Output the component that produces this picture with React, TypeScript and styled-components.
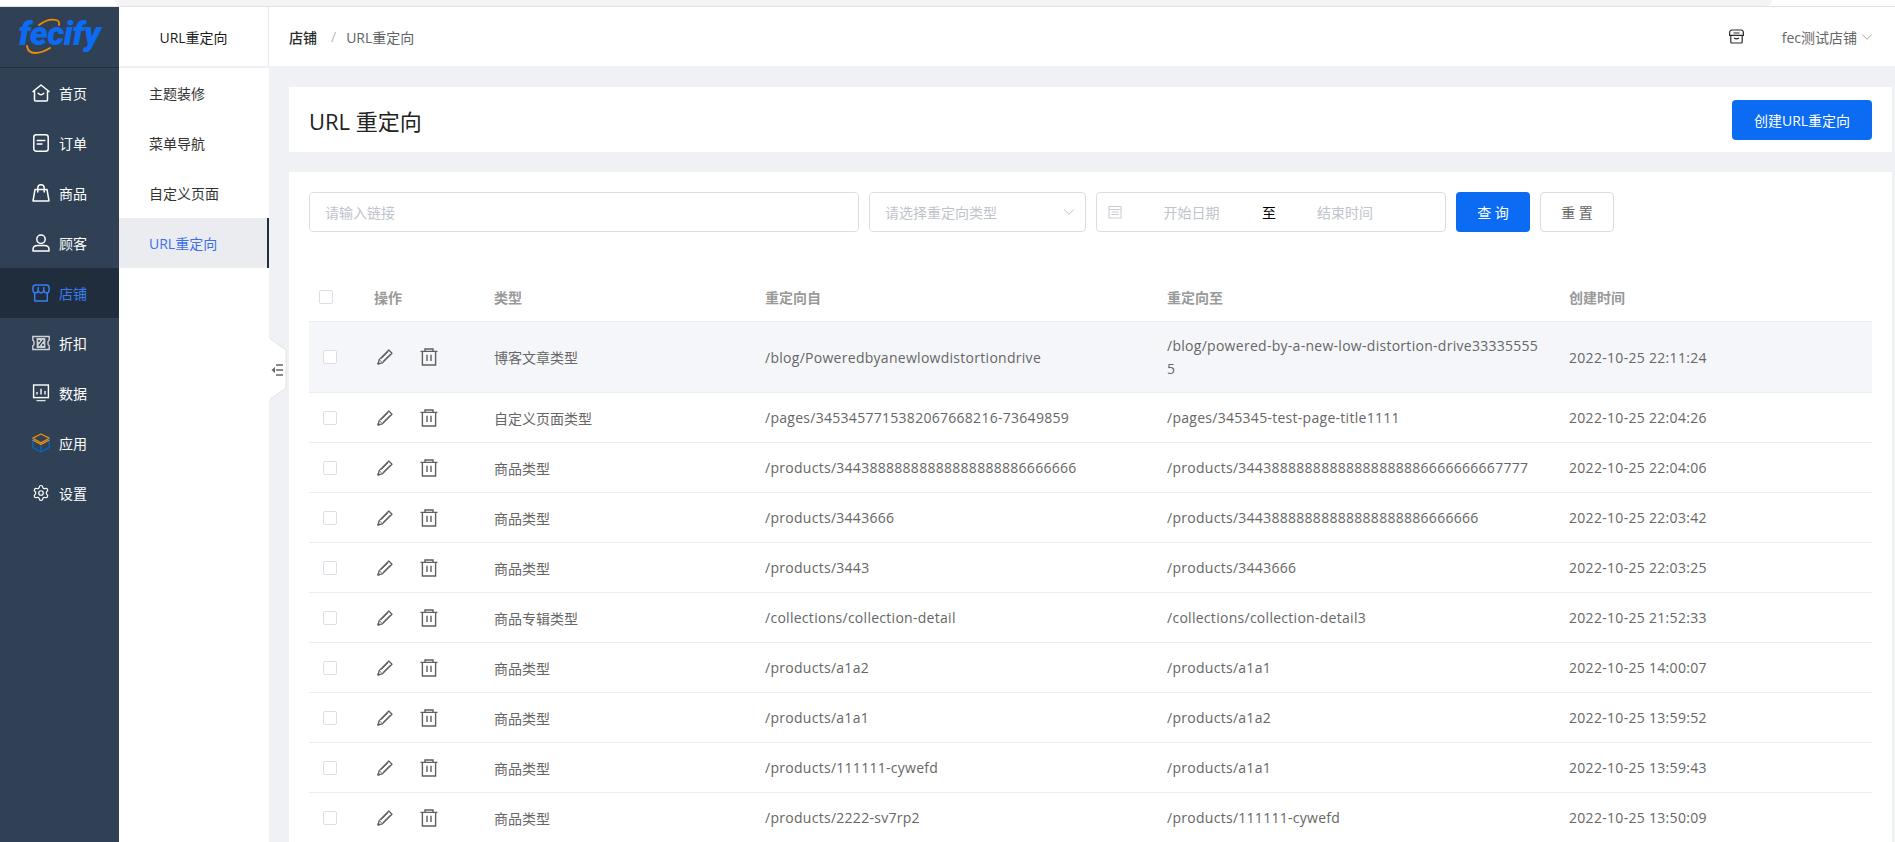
import React from "react";
import styled, { createGlobalStyle } from "styled-components";
import { Settings, ChevronDown } from "lucide-react";

const Global = createGlobalStyle`
  html, body { margin: 0; padding: 0; height: 100%; overflow: hidden; }
  body { font-family: "Open Sans", "Noto Sans CJK SC", sans-serif; font-size: 14px; background: #fff; }
  #root { height: 100%; }
  * { box-sizing: border-box; }
`;

const BLUE = "#0b6cf3";
const LINE = "#dcdee6";

const Shell = styled.div`
  display: flex;
  flex-direction: column;
  height: 842px;
  overflow: hidden;
`;
const BrowserStrip = styled.div`
  height: 7px;
  flex: none;
  padding-left: 115px;
  padding-right: 123px;
  border-bottom: 1px solid #e2e2e2;
  background: #fff;
`;
const BrowserTab = styled.div`
  height: 6px;
  background: #f4f4f4;
  border-radius: 0 0 8px 8px;
`;
const Body = styled.div`
  flex: 1;
  display: flex;
  min-height: 0;
`;
const Sidebar = styled.nav`
  width: 119px;
  flex: none;
  background: #304156;
  display: flex;
  flex-direction: column;
`;
const LogoBox = styled.div`
  position: relative;
  height: 61px;
  flex: none;
  border-bottom: 1px solid #242f3d;
  display: flex;
  justify-content: center;
  padding-top: 3px;
`;
const LogoText = styled.span`
  font-family: "Roboto", "Liberation Sans", sans-serif;
  font-weight: 900;
  font-style: italic;
  font-size: 34px;
  line-height: 46px;
  letter-spacing: -0.5px;
  color: ${BLUE};
`;
const Swoosh = styled.svg`
  position: absolute;
  left: 20px;
  top: 10px;
`;
const NavItem = styled.div<{ $active?: boolean }>`
  height: 50px;
  flex: none;
  display: flex;
  align-items: center;
  padding-left: 32px;
  gap: 9px;
  background: ${(p) => (p.$active ? "#1f2d3d" : "transparent")};
  color: ${(p) => (p.$active ? "#3a7df0" : "#fff")};
  font-size: 14px;
`;
const NavIconBox = styled.span`
  width: 18px;
  height: 18px;
  display: flex;
  align-items: center;
  justify-content: center;
  flex: none;
`;
const SubNav = styled.aside`
  width: 150px;
  flex: none;
  background: #fff;
  display: flex;
  flex-direction: column;
`;
const SubHead = styled.div`
  height: 59px;
  flex: none;
  display: flex;
  align-items: center;
  justify-content: center;
  color: #1c1c1c;
  border-right: 1px solid #e8eaef;
`;
const SubDivider = styled.div`
  height: 2px;
  flex: none;
  background: #eef0f5;
`;
const SubItem = styled.div<{ $active?: boolean }>`
  height: 50px;
  flex: none;
  display: flex;
  align-items: center;
  padding-left: 30px;
  color: ${(p) => (p.$active ? "#3b6fe8" : "#333")};
  background: ${(p) => (p.$active ? "#ebecf0" : "#fff")};
  border-right: 2px solid ${(p) => (p.$active ? "#1f2d3d" : "#fff")};
`;
const Main = styled.main`
  position: relative;
  flex: 1;
  min-width: 0;
  background: #f0f1f5;
  display: flex;
  flex-direction: column;
`;
const TopBar = styled.header`
  height: 59px;
  flex: none;
  background: #fff;
  display: flex;
  align-items: center;
  padding: 0 19px 0 20px;
`;
const Crumb = styled.span`
  color: #2b2b2b;
  font-weight: 500;
`;
const CrumbSep = styled.span`
  color: #b5b8c0;
  margin: 0 10px 0 14px;
`;
const CrumbNow = styled.span`
  color: #606266;
`;
const TopRight = styled.div`
  margin-left: auto;
  display: flex;
  align-items: center;
  color: #666;
`;
const StoreName = styled.span`
  margin-left: 38px;
  margin-right: 1px;
`;
const Content = styled.div`
  flex: 1;
  min-height: 0;
  padding: 21px 3px 0 20px;
  display: flex;
  flex-direction: column;
  gap: 20px;
`;
const PageHead = styled.section`
  height: 65px;
  flex: none;
  background: #fff;
  display: flex;
  align-items: center;
  justify-content: space-between;
  padding: 0 20px 0 20px;
`;
const Title = styled.h1`
  margin: 0;
  font-size: 22px;
  font-weight: 400;
  color: #222;
`;
const PrimaryButton = styled.button<{ $w: number }>`
  width: ${(p) => p.$w}px;
  height: 40px;
  flex: none;
  border: 0;
  border-radius: 4px;
  padding: 0;
  background: ${BLUE};
  color: #fff;
  font: inherit;
`;
const PlainButton = styled.button`
  width: 74px;
  height: 40px;
  flex: none;
  border: 1px solid ${LINE};
  border-radius: 4px;
  padding: 0;
  background: #fff;
  color: #666;
  font: inherit;
`;
const Card = styled.section`
  flex: 1;
  min-height: 0;
  background: #fff;
  padding: 20px 20px 0;
  overflow: hidden;
`;
const Filters = styled.div`
  display: flex;
  gap: 10px;
  height: 40px;
`;
const Field = styled.div<{ $w: number }>`
  width: ${(p) => p.$w}px;
  height: 40px;
  flex: none;
  border: 1px solid ${LINE};
  border-radius: 4px;
  display: flex;
  align-items: center;
  padding: 0 15px;
  color: #c0c4cc;
`;
const SelectField = styled(Field)`
  justify-content: space-between;
  padding-right: 7px;
`;
const DateField = styled(Field)`
  padding: 0 0 0 11px;
`;
const RangeText = styled.span<{ $w: number }>`
  width: ${(p) => p.$w}px;
  text-align: center;
  flex: none;
`;
const RangeSep = styled.span`
  width: 16px;
  flex: none;
  text-align: center;
  color: #000;
`;
const Table = styled.div`
  margin-top: 40px;
`;
const Row = styled.div<{ $head?: boolean; $hi?: boolean; $h: number }>`
  display: grid;
  grid-template-columns: 65px 120px 271px 402px 402px 1fr;
  align-items: center;
  height: ${(p) => p.$h}px;
  border-bottom: 1px solid #ebedf2;
  background: ${(p) => (p.$hi ? "#f5f6fa" : "#fff")};
  color: ${(p) => (p.$head ? "#999" : "#666")};
  font-weight: ${(p) => (p.$head ? 700 : 400)};
`;
const CheckCell = styled.div<{ $head?: boolean }>`
  padding-left: ${(p) => (p.$head ? 10 : 14)}px;
  display: flex;
`;
const Check = styled.span`
  width: 14px;
  height: 14px;
  border: 1px solid ${LINE};
  border-radius: 2px;
  background: #fff;
`;
const Actions = styled.div`
  display: flex;
  align-items: center;
  padding-left: 3px;
  gap: 27px;
`;
const Link = styled.div`
  padding-right: 27px;
  word-break: break-all;
  line-height: 23px;
  letter-spacing: 0.28px;
`;
const DateCell = styled.div`
  letter-spacing: 0.3px;
`;
const Handle = styled.svg`
  position: absolute;
  left: 0;
  top: 331px;
`;

const Icon = styled.svg`
  display: block;
  flex: none;
`;

const stroke = { fill: "none", stroke: "currentColor", strokeWidth: 1.5, strokeLinecap: "round" as const, strokeLinejoin: "round" as const };

const HomeIcon = () => (
  <Icon width="18" height="18" viewBox="0 0 18 18" {...stroke}>
    <path d="M9 1 L17 7.5 H15.5 V16 a1 1 0 0 1 -1 1 H3.5 a1 1 0 0 1 -1 -1 V7.5 H1 Z" />
    <path d="M6.2 9.2 Q9 12.2 11.8 9.2" />
  </Icon>
);
const OrderIcon = () => (
  <Icon width="18" height="18" viewBox="0 0 18 18" {...stroke}>
    <rect x="1.8" y="0.8" width="14.4" height="16.4" rx="2.5" />
    <path d="M5.2 6.5 H12.8 M5.2 10 H10" />
  </Icon>
);
const BagIcon = () => (
  <Icon width="18" height="18" viewBox="0 0 18 18" {...stroke}>
    <path d="M3 5.5 H15 L17 17 H1 Z" />
    <path d="M5.8 8 V4 a3.2 3.2 0 0 1 6.4 0 V8" />
  </Icon>
);
const UserIcon = () => (
  <Icon width="18" height="18" viewBox="0 0 18 18" {...stroke}>
    <circle cx="9" cy="5.2" r="4.2" />
    <path d="M1 17 V15.5 Q1 11.5 5.5 11.5 H12.5 Q17 11.5 17 15.5 V17 Z" />
  </Icon>
);
const ShopIcon = () => (
  <Icon width="18" height="18" viewBox="0 0 18 18" {...stroke}>
    <path d="M3.5 1 H14.5 Q17.2 1 17.2 4.5 Q17.2 9 14.6 9 Q12.4 9 11.8 6.8 Q11 9 9 9 Q7 9 6.2 6.8 Q5.6 9 3.4 9 Q0.8 9 0.8 4.5 Q0.8 1 3.5 1 Z" />
    <path d="M6.2 3.5 V6.8 M11.8 3.5 V6.8" />
    <path d="M2.7 9 V17 H15.3 V9" />
  </Icon>
);
const TicketIcon = () => (
  <Icon width="18" height="18" viewBox="0 0 18 18">
    <path d="M0.8 2.5 H17.2 V6.2 Q15.6 7 16 9 Q15.6 11 17.2 11.8 V15.5 H0.8 V11.8 Q2.4 11 2 9 Q2.4 7 0.8 6.2 Z" fill="none" stroke="#cfd3d8" strokeWidth="1.4" />
    <rect x="4.6" y="4" width="8.8" height="10" fill="#c9ced5" />
    <path d="M6.8 11.8 L11.2 6.2" stroke="#1f2d3d" strokeWidth="1.1" />
    <circle cx="7" cy="7" r="0.9" fill="#1f2d3d" />
    <circle cx="11" cy="11" r="0.9" fill="#1f2d3d" />
  </Icon>
);
const ChartIcon = () => (
  <Icon width="18" height="18" viewBox="0 0 18 18">
    <rect x="1.6" y="1" width="14.8" height="12.6" fill="none" stroke="#fff" strokeWidth="1.4" />
    <path d="M5 10.5 V8 M9 10.5 V4.8 M13 10.5 V7" stroke="#dfe3e8" strokeWidth="1.6" />
    <path d="M4.5 16.6 H13.5" stroke="#dfe3e8" strokeWidth="1.3" />
  </Icon>
);
const CubeIcon = () => (
  <Icon width="18" height="20" viewBox="0 0 18 20" fill="none" strokeWidth="1.3" strokeLinejoin="round">
    <path d="M9 1 L17.2 5.2 L9 9.8 L0.8 5.2 Z" stroke="#e8910f" />
    <path d="M0.8 5.6 V14.6 L9 19 L17.2 14.6 V5.6 M9 10.2 V19" stroke="#0b66bd" />
    <path d="M0.8 7 L9 11.4 L17.2 7" stroke="#e8910f" />
  </Icon>
);
const PencilIcon = () => (
  <Icon width="16" height="16" viewBox="0 0 16 16" fill="none" stroke="#5f5f5f" strokeWidth="1.25" strokeLinejoin="round">
    <path d="M1 15 L2.2 10.6 L11.8 1 L15 4.2 L5.4 13.8 Z" />
    <path d="M2.2 10.6 L5.4 13.8 M4.2 9.8 L11.2 2.8 M6.4 12 L13.4 5" strokeWidth="0.9" />
    <path d="M1 15 L2.6 14.6 L1.4 13.4 Z" fill="#5f5f5f" />
  </Icon>
);
const TrashIcon = () => (
  <Icon width="18" height="18" viewBox="0 0 18 18" fill="none" stroke="#5f5f5f" strokeWidth="1.4">
    <path d="M0.5 3.4 H17.5 M5 3.2 V1 H13 V3.2" />
    <path d="M2.4 3.4 V17 H15.6 V3.4" />
    <path d="M7 6.8 V13 M11 6.8 V13" />
  </Icon>
);
const CalendarIcon = () => (
  <Icon width="14" height="14" viewBox="0 0 14 14" fill="none" stroke="#c8ccd3" strokeWidth="1">
    <rect x="1" y="1.5" width="12" height="11.5" />
    <path d="M1 4.5 H13 M3.5 7 H10.5 M3.5 9.5 H10.5" />
  </Icon>
);
const HeadStoreIcon = () => (
  <Icon width="15" height="15" viewBox="0 0 15 15" fill="none" stroke="#2b2b2b" strokeWidth="1.2">
    <path d="M3 1 H12 Q14.4 1 14.4 4 V6.4 H0.6 V4 Q0.6 1 3 1 Z" />
    <path d="M1.8 6.4 V13 a1 1 0 0 0 1 1 H12.2 a1 1 0 0 0 1 -1 V6.4" />
    <path d="M4.5 4 H10.5 M5 9 Q7.5 10.6 10 9" />
  </Icon>
);

const menu = [
  { label: "首页", icon: <HomeIcon /> },
  { label: "订单", icon: <OrderIcon /> },
  { label: "商品", icon: <BagIcon /> },
  { label: "顾客", icon: <UserIcon /> },
  { label: "店铺", icon: <ShopIcon />, active: true },
  { label: "折扣", icon: <TicketIcon /> },
  { label: "数据", icon: <ChartIcon /> },
  { label: "应用", icon: <CubeIcon /> },
  { label: "设置", icon: <Settings size={20} strokeWidth={1.6} /> },
];

const rows = [
  ["博客文章类型", "/blog/Poweredbyanewlowdistortiondrive", "/blog/powered-by-a-new-low-distortion-drive333355555", "2022-10-25 22:11:24"],
  ["自定义页面类型", "/pages/3453457715382067668216-73649859", "/pages/345345-test-page-title1111", "2022-10-25 22:04:26"],
  ["商品类型", "/products/34438888888888888888886666666", "/products/34438888888888888888886666666667777", "2022-10-25 22:04:06"],
  ["商品类型", "/products/3443666", "/products/34438888888888888888886666666", "2022-10-25 22:03:42"],
  ["商品类型", "/products/3443", "/products/3443666", "2022-10-25 22:03:25"],
  ["商品专辑类型", "/collections/collection-detail", "/collections/collection-detail3", "2022-10-25 21:52:33"],
  ["商品类型", "/products/a1a2", "/products/a1a1", "2022-10-25 14:00:07"],
  ["商品类型", "/products/a1a1", "/products/a1a2", "2022-10-25 13:59:52"],
  ["商品类型", "/products/111111-cywefd", "/products/a1a1", "2022-10-25 13:59:43"],
  ["商品类型", "/products/2222-sv7rp2", "/products/111111-cywefd", "2022-10-25 13:50:09"],
];

export default function App() {
  return (
    <>
      <Global />
      <Shell>
        <BrowserStrip>
          <BrowserTab />
        </BrowserStrip>
        <Body>
          <Sidebar>
            <LogoBox>
              <LogoText>fecify</LogoText>
              <Swoosh width="60" height="50" viewBox="0 0 60 50" fill="none" stroke="#f08c00" strokeLinecap="round">
                <path d="M19 8 Q28 1 36 3 Q40 4 39 8" strokeWidth="1.8" />
                <path d="M7 29 Q8 36 15 36 Q22 36 30 31" strokeWidth="1.8" />
              </Swoosh>
            </LogoBox>
            {menu.map((m) => (
              <NavItem key={m.label} $active={m.active}>
                <NavIconBox>{m.icon}</NavIconBox>
                {m.label}
              </NavItem>
            ))}
          </Sidebar>
          <SubNav>
            <SubHead>URL重定向</SubHead>
            <SubDivider />
            <SubItem>主题装修</SubItem>
            <SubItem>菜单导航</SubItem>
            <SubItem>自定义页面</SubItem>
            <SubItem $active>URL重定向</SubItem>
          </SubNav>
          <Main>
            <TopBar>
              <Crumb>店铺</Crumb>
              <CrumbSep>/</CrumbSep>
              <CrumbNow>URL重定向</CrumbNow>
              <TopRight>
                <HeadStoreIcon />
                <StoreName>fec测试店铺</StoreName>
                <ChevronDown size={18} strokeWidth={1} color="#888" />
              </TopRight>
            </TopBar>
            <Content>
              <PageHead>
                <Title>URL 重定向</Title>
                <PrimaryButton $w={140}>创建URL重定向</PrimaryButton>
              </PageHead>
              <Card>
                <Filters>
                  <Field $w={550}>请输入链接</Field>
                  <SelectField $w={217}>
                    请选择重定向类型
                    <ChevronDown size={18} strokeWidth={1.2} color="#b8bcc4" />
                  </SelectField>
                  <DateField $w={350}>
                    <CalendarIcon />
                    <RangeText $w={139}>开始日期</RangeText>
                    <RangeSep>至</RangeSep>
                    <RangeText $w={136}>结束时间</RangeText>
                  </DateField>
                  <PrimaryButton $w={74}>查 询</PrimaryButton>
                  <PlainButton>重 置</PlainButton>
                </Filters>
                <Table>
                  <Row $head $h={50}>
                    <CheckCell $head>
                      <Check />
                    </CheckCell>
                    <div>操作</div>
                    <div>类型</div>
                    <div>重定向自</div>
                    <div>重定向至</div>
                    <div>创建时间</div>
                  </Row>
                  {rows.map((r, i) => (
                    <Row key={i} $h={i === 0 ? 71 : 50} $hi={i === 0}>
                      <CheckCell>
                        <Check />
                      </CheckCell>
                      <Actions>
                        <PencilIcon />
                        <TrashIcon />
                      </Actions>
                      <div>{r[0]}</div>
                      <Link>{r[1]}</Link>
                      <Link>{r[2]}</Link>
                      <DateCell>{r[3]}</DateCell>
                    </Row>
                  ))}
                </Table>
              </Card>
            </Content>
            <Handle width="20" height="63" viewBox="0 0 20 63">
              <path d="M0 0 L17 12 V50 L0 62 Z" fill="#fff" stroke="#e3e4e8" strokeWidth="1" />
              <path d="M0 0 V62" stroke="#fff" strokeWidth="2" />
              <path d="M7 27 H14 M7 32 H14 M7 37 H14" stroke="#666" strokeWidth="1.5" />
              <path d="M6 29 V35 L2.5 32 Z" fill="#666" />
            </Handle>
          </Main>
        </Body>
      </Shell>
    </>
  );
}
